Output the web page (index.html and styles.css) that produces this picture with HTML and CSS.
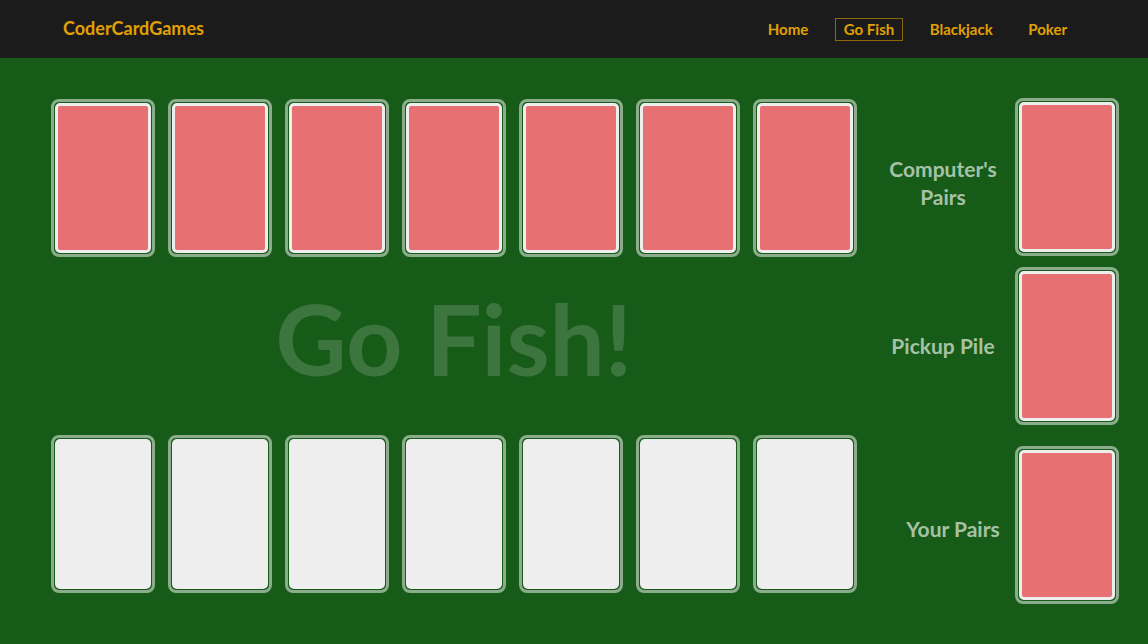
FILE: index.html
```html
<!DOCTYPE html>
<html lang="en">
<head>
<meta charset="utf-8">
<title>CoderCardGames - Go Fish</title>
<link rel="stylesheet" href="styles.css">
</head>
<body>
<header class="navbar">
  <a class="brand" href="#">CoderCardGames</a>
  <nav class="nav">
    <a class="nav-link" href="#">Home</a>
    <a class="nav-link active" href="#">Go Fish</a>
    <a class="nav-link" href="#">Blackjack</a>
    <a class="nav-link" href="#">Poker</a>
  </nav>
</header>
<main class="table">
  <section class="hands">
    <div class="hand">
      <div class="slot"><div class="card back"></div></div>
      <div class="slot"><div class="card back"></div></div>
      <div class="slot"><div class="card back"></div></div>
      <div class="slot"><div class="card back"></div></div>
      <div class="slot"><div class="card back"></div></div>
      <div class="slot"><div class="card back"></div></div>
      <div class="slot"><div class="card back"></div></div>
    </div>
    <div class="title-area">
      <h1 class="title">Go Fish!</h1>
    </div>
    <div class="hand">
      <div class="slot"><div class="card front"></div></div>
      <div class="slot"><div class="card front"></div></div>
      <div class="slot"><div class="card front"></div></div>
      <div class="slot"><div class="card front"></div></div>
      <div class="slot"><div class="card front"></div></div>
      <div class="slot"><div class="card front"></div></div>
      <div class="slot"><div class="card front"></div></div>
    </div>
  </section>
  <aside class="piles">
    <div class="pile pile-computer">
      <div class="pile-label">Computer's<br>Pairs</div>
      <div class="slot"><div class="card back"></div></div>
    </div>
    <div class="pile pile-pickup">
      <div class="pile-label">Pickup Pile</div>
      <div class="slot"><div class="card back"></div></div>
    </div>
    <div class="pile pile-mine">
      <div class="pile-label">Your Pairs</div>
      <div class="slot"><div class="card back"></div></div>
    </div>
  </aside>
</main>
</body>
</html>
```

FILE: styles.css
```css
* { box-sizing: border-box; }

body {
  margin: 0;
  background: #175b19;
  font-family: "Lato", "Noto Sans", sans-serif;
  min-height: 644px;
}

.navbar {
  height: 58px;
  background: #1b1b1b;
  display: flex;
  align-items: center;
  justify-content: space-between;
  padding: 0 72px 0 63px;
}

.brand {
  color: #e1a005;
  font-size: 18px;
  font-weight: 700;
  text-decoration: none;
  margin-top: -2px;
}

.nav {
  display: flex;
  align-items: center;
  gap: 17.5px;
}

.nav-link {
  color: #e1a005;
  font-size: 15px;
  font-weight: 700;
  text-decoration: none;
  padding: 2px 8px;
  border: 1px solid transparent;
  line-height: 17px;
}

.nav-link.active {
  border-color: #8d670d;
}

.table {
  display: flex;
  padding: 41px 0 0 51px;
}

.hands {
  display: flex;
  flex-direction: column;
}

.hand {
  display: flex;
  gap: 13px;
}

.slot {
  padding: 1px;
  border: 3px solid rgba(255, 255, 255, 0.5);
  border-radius: 8px;
}

.card {
  width: 96px;
  height: 150px;
  border-radius: 5px;
}

.card.back {
  background: #e77073;
  border: 3px solid #eeeeee;
}

.card.front {
  background: #eeeeee;
}

.title-area {
  height: 178px;
  display: flex;
  align-items: center;
  justify-content: center;
}

.title {
  margin: -16px 0 0;
  font-size: 98px;
  font-weight: 700;
  line-height: 1;
  color: rgba(255, 255, 255, 0.16);
}

.piles {
  margin-left: 23px;
  display: flex;
  flex-direction: column;
}

.pile {
  display: flex;
  align-items: center;
  gap: 9px;
}

.pile-computer { margin-top: -1px; }
.pile-pickup { margin-top: 11px; }
.pile-mine { margin-top: 21px; }

.pile-label {
  width: 126px;
  text-align: center;
  color: #a6c2a5;
  font-size: 21px;
  font-weight: 700;
  line-height: 28px;
}

.pile-computer .pile-label { padding-top: 12px; }
.pile-mine .pile-label { padding-left: 20px; padding-top: 8px; }
```
